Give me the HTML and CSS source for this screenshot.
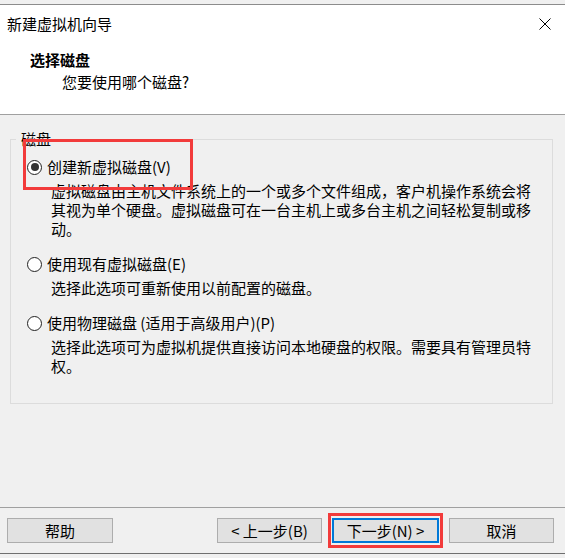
FILE: index.html
```html
<!DOCTYPE html>
<html lang="zh-CN">
<head>
<meta charset="utf-8">
<title>新建虚拟机向导</title>
<link rel="stylesheet" href="styles.css">
</head>
<body>
<div class="window">
  <div class="header">
    <div class="titlebar">
      <span class="title">新建虚拟机向导</span>
      <svg class="close" width="12" height="12" viewBox="0 0 12 12"><path d="M0.5 0.5L11.5 11.5M11.5 0.5L0.5 11.5" stroke="#000" stroke-width="1" fill="none"/></svg>
    </div>
    <div class="heading">选择磁盘</div>
    <div class="subheading">您要使用哪个磁盘?</div>
  </div>
  <div class="main">
    <fieldset class="group">
      <legend class="legend">磁盘</legend>
      <div class="option option-first">
        <div class="radio-row">
          <span class="radio radio-on"></span>
          <span class="radio-label">创建新虚拟磁盘(V)</span>
        </div>
        <div class="desc">虚拟磁盘由主机文件系统上的一个或多个文件组成，客户机操作系统会将其视为单个硬盘。虚拟磁盘可在一台主机上或多台主机之间轻松复制或移动。</div>
        <span class="mark mark-option"></span>
      </div>
      <div class="option">
        <div class="radio-row">
          <span class="radio"></span>
          <span class="radio-label">使用现有虚拟磁盘(E)</span>
        </div>
        <div class="desc">选择此选项可重新使用以前配置的磁盘。</div>
      </div>
      <div class="option">
        <div class="radio-row">
          <span class="radio"></span>
          <span class="radio-label">使用物理磁盘 (适用于高级用户)(P)</span>
        </div>
        <div class="desc">选择此选项可为虚拟机提供直接访问本地硬盘的权限。需要具有管理员特权。</div>
      </div>
    </fieldset>
  </div>
  <div class="footer">
    <button class="btn btn-help">帮助</button>
    <div class="spacer"></div>
    <button class="btn btn-back">&lt; 上一步(B)</button>
    <div class="next-wrap">
      <button class="btn btn-next">下一步(N) &gt;</button>
      <span class="mark mark-next"></span>
    </div>
    <button class="btn btn-cancel">取消</button>
  </div>
</div>
</body>
</html>
```
FILE: styles.css
```css
html, body {
  margin: 0;
  padding: 0;
}
body {
  width: 565px;
  height: 558px;
  background: #f0f0f0;
  font-family: "Noto Sans CJK SC", "Noto Sans", sans-serif;
  font-size: 15px;
  color: #000;
  padding-top: 4px;
  box-sizing: border-box;
  overflow: hidden;
}
.window {
  border-top: 1px solid #8c8c8c;
  border-bottom: 1px solid #6f6f6f;
  background: #f0f0f0;
}
.header {
  height: 109px;
  background: #fff;
  border-bottom: 1px solid #a0a0a0;
}
.titlebar {
  display: flex;
  align-items: center;
  justify-content: space-between;
  padding: 8px 14px 0 7px;
  height: 21px;
}
.title {
  line-height: 21px;
}
.close {
  display: block;
}
.heading {
  margin-top: 15px;
  padding-left: 30px;
  font-weight: bold;
  line-height: 22px;
}
.subheading {
  padding-left: 62px;
  line-height: 22px;
}
.main {
  height: 392px;
  box-sizing: border-box;
  padding: 14px 12px 0 10px;
}
.group {
  margin: 0;
  min-width: 0;
  border: 1px solid #dcdcdc;
  padding: 8px 0 28px 0;
}
.legend {
  margin-left: 5px;
  padding: 0 5px;
  line-height: 20px;
}
.option {
  position: relative;
  padding-left: 16px;
  margin-bottom: 16px;
}
.option:last-child {
  margin-bottom: 0;
}
.radio-row {
  display: flex;
  align-items: center;
  height: 20px;
}
.radio {
  width: 15px;
  height: 15px;
  box-sizing: border-box;
  border: 1px solid #222;
  border-radius: 50%;
  background: #fff;
  display: flex;
  align-items: center;
  justify-content: center;
  margin-right: 5px;
  flex: none;
}
.radio-on::after {
  content: "";
  width: 8px;
  height: 8px;
  border-radius: 50%;
  background: #333;
}
.radio-label {
  line-height: 20px;
  white-space: nowrap;
}
.desc {
  margin-top: 4px;
  margin-left: 24px;
  width: 486px;
  line-height: 19px;
}
.mark {
  position: absolute;
  border: 3px solid #f23b3b;
  box-sizing: border-box;
  pointer-events: none;
}
.mark-option {
  left: 12px;
  top: -18px;
  width: 170px;
  height: 51px;
}
.footer {
  border-top: 1px solid #a0a0a0;
  display: flex;
  align-items: center;
  padding: 10px 11px 10px 7px;
}
.spacer {
  flex: 1;
}
.btn {
  font-family: inherit;
  font-size: 15px;
  color: #000;
  height: 25px;
  box-sizing: border-box;
  border: 1px solid #adadad;
  background: #e1e1e1;
  padding: 0;
  margin: 0;
  line-height: 21px;
}
.btn-help {
  width: 106px;
}
.btn-back {
  width: 105px;
}
.next-wrap {
  position: relative;
  margin: 0 10px;
  display: flex;
}
.btn-next {
  width: 107px;
  border: 2px solid #0078d7;
}
.mark-next {
  left: -4px;
  top: -5px;
  width: 115px;
  height: 35px;
}
.btn-cancel {
  width: 105px;
}
```
